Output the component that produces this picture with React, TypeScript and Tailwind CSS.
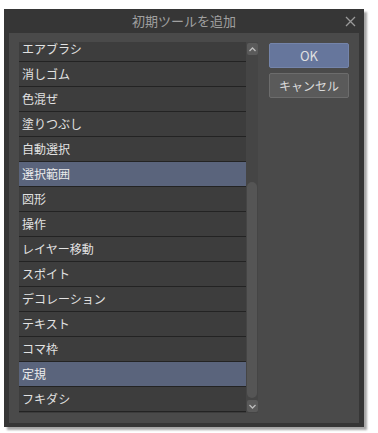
import React from "react";

const items = [
  "エアブラシ",
  "消しゴム",
  "色混ぜ",
  "塗りつぶし",
  "自動選択",
  "選択範囲",
  "図形",
  "操作",
  "レイヤー移動",
  "スポイト",
  "デコレーション",
  "テキスト",
  "コマ枠",
  "定規",
  "フキダシ",
];
const selected = new Set(["選択範囲", "定規"]);

export default function App() {
  return (
    <div
      className="w-[378px] h-[433px] bg-white pt-[9px] pl-[4px]"
      style={{ fontFamily: '"Noto Sans CJK JP", "Noto Sans", sans-serif' }}
    >
      <div className="w-[360px] h-[418px] bg-[#363636] flex flex-col shadow-[3px_3px_2px_rgba(0,0,0,0.35)]">
        <div className="h-[24px] relative flex items-center justify-center text-[13px] text-[#a0a0a0]">
          <span>初期ツールを追加</span>
          <svg
            className="absolute left-[341px] top-[7px]"
            width="11"
            height="11"
            viewBox="0 0 11 11"
          >
            <path d="M1 1L10 10M10 1L1 10" stroke="#9a9a9a" strokeWidth="1.3" />
          </svg>
        </div>
        <div className="mx-[5px] h-[390px] bg-[#4a4a4a] flex pl-[10px] pt-[9px]">
          <div className="w-[239px] h-[371px] flex bg-[#424242]">
            <div className="w-[227px] h-[371px] bg-[#3c3c3c] flex flex-col">
              {items.map((t, i) => (
                <div
                  key={t}
                  className={`border-b border-[#232323] flex pl-[3px] text-[12px] leading-none ${
                    i === 0 ? "h-[20px] items-start pt-[1px]" : "h-[25px] items-center"
                  } ${
                    selected.has(t)
                      ? "bg-[#5a647c] text-[#ececec]"
                      : "bg-[#3d3d3d] text-[#e2e2e2]"
                  }`}
                >
                  {t}
                </div>
              ))}
            </div>
            <div className="w-[12px] flex flex-col items-center pt-[1px] bg-[#454545]">
              <div className="w-[11px] h-[12px] bg-[#5a5a5a] rounded-[2px] flex items-center justify-center">
                <svg width="7" height="5" viewBox="0 0 7 5">
                  <path d="M0.5 4L3.5 1L6.5 4" stroke="#bdbdbd" strokeWidth="1.3" fill="none" />
                </svg>
              </div>
              <div className="flex-1 w-full pt-[127px] pb-[2px] flex justify-center">
                <div className="w-[10px] h-full bg-[#555555] rounded-[5px]" />
              </div>
              <div className="w-[11px] h-[12px] bg-[#5a5a5a] rounded-[2px] flex items-center justify-center mb-[1px]">
                <svg width="7" height="5" viewBox="0 0 7 5">
                  <path d="M0.5 1L3.5 4L6.5 1" stroke="#bdbdbd" strokeWidth="1.3" fill="none" />
                </svg>
              </div>
            </div>
          </div>
          <div className="ml-[11px] flex flex-col gap-[5px] pt-[1px]">
            <div className="w-[80px] h-[25px] bg-[#66769c] border border-[#7484aa] rounded-[2px] flex items-center justify-center text-[13px] text-[#e0e0e0]">
              OK
            </div>
            <div className="w-[80px] h-[25px] bg-[#5a5a5a] border border-[#6c6c6c] rounded-[2px] flex items-center justify-center text-[12px] text-[#dadada]">
              キャンセル
            </div>
          </div>
        </div>
      </div>
    </div>
  );
}
